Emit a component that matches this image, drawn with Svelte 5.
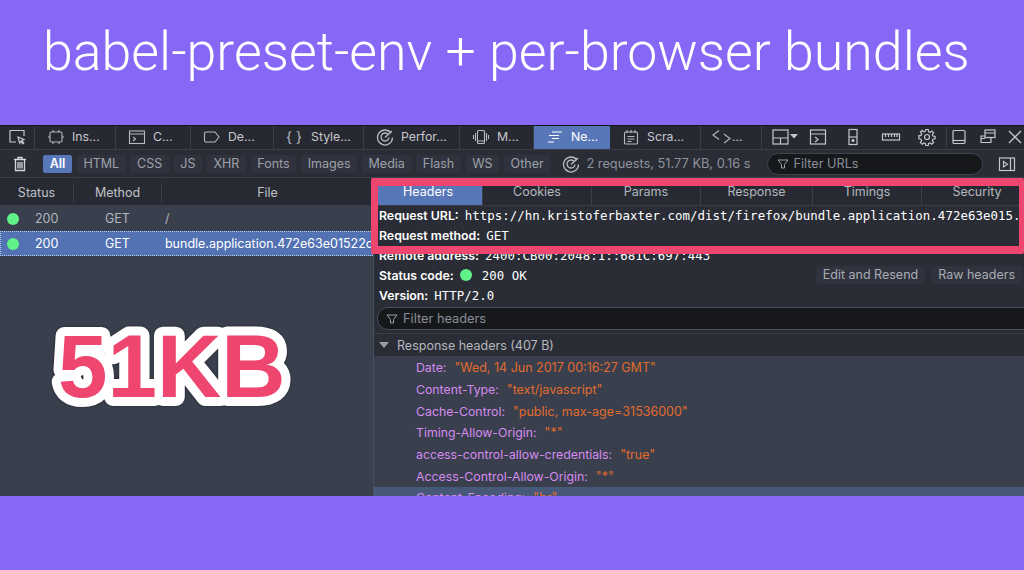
<script>
  const tools = [
    { label: 'Ins...', w: 81, icon: 'ins' },
    { label: 'C...', w: 75, icon: 'con' },
    { label: 'De...', w: 83, icon: 'dbg' },
    { label: 'Style...', w: 90, icon: 'sty' },
    { label: 'Perfor...', w: 96, icon: 'perf' },
    { label: 'M...', w: 74, icon: 'mem' },
    { label: 'Ne...', w: 76, icon: 'net', active: true },
    { label: 'Scra...', w: 91, icon: 'scr' },
    { label: '...', w: 61, icon: 'dom' }
  ];
  const filters = ['All', 'HTML', 'CSS', 'JS', 'XHR', 'Fonts', 'Images', 'Media', 'Flash', 'WS', 'Other'];
  const tabs = [
    { t: 'Headers', w: 109, active: true },
    { t: 'Cookies', w: 109 },
    { t: 'Params', w: 109 },
    { t: 'Response', w: 112 },
    { t: 'Timings', w: 109 },
    { t: 'Security', w: 110 }
  ];
  const headers = [
    ['Date', '"Wed, 14 Jun 2017 00:16:27 GMT"'],
    ['Content-Type', '"text/javascript"'],
    ['Cache-Control', '"public, max-age=31536000"'],
    ['Timing-Allow-Origin', '"*"'],
    ['access-control-allow-credentials', '"true"'],
    ['Access-Control-Allow-Origin', '"*"'],
    ['Content-Encoding', '"br"']
  ];
</script>

{#snippet gauge()}
  <svg class="ic" viewBox="0 0 18 18" width="18" height="18" fill="none" stroke="#b6bac2" stroke-width="1.3">
    <path d="M15 5A7.5 7.5 0 1 0 16.5 9.5" />
    <path d="M12.5 7A4 4 0 1 0 13 9.5" />
    <path d="M9 9.5l7-6.5" />
  </svg>
{/snippet}

<div class="slide">
  <h1>babel-preset-env + per-browser bundles</h1>
  <div class="devtools">
    <div class="toolbar">
      <div class="pick">
        <svg viewBox="0 0 18 18" width="18" height="18" fill="none" stroke="#c4c7ce" stroke-width="1.2">
          <path d="M8 14H2V2.5h14V8" /><path d="M10 9l6 2.5-2.4 1 2.2 2.5-1 .8-2.1-2.4L11.6 15z" />
        </svg>
      </div>
      {#each tools as t}
        <div class="tool" class:active={t.active} style="width:{t.w}px">
          {#if t.icon === 'ins'}
            <svg viewBox="0 0 18 18" width="18" height="18" fill="none" stroke="#b6bac2" stroke-width="1.1"><rect x="3" y="4" width="12" height="10" rx="1.5" /><path d="M6 4V2M12 4V2M6 16v-2M12 16v-2M1 9h2M15 9h2" /></svg>
          {:else if t.icon === 'con'}
            <svg viewBox="0 0 18 18" width="18" height="18" fill="none" stroke="#b6bac2" stroke-width="1.1"><rect x="1.5" y="3" width="15" height="12.5" /><path d="M1.5 6h15M5 9l2.5 2L5 13" /></svg>
          {:else if t.icon === 'dbg'}
            <svg viewBox="0 0 18 18" width="18" height="18" fill="none" stroke="#b6bac2" stroke-width="1.1"><path d="M3 4h9l4 5-4 5H3a1.5 1.5 0 0 1-1.5-1.5v-7A1.5 1.5 0 0 1 3 4z" /></svg>
          {:else if t.icon === 'sty'}
            <span class="braces">&#123; &#125;</span>
          {:else if t.icon === 'perf'}
            {@render gauge()}
          {:else if t.icon === 'mem'}
            <svg viewBox="0 0 18 18" width="18" height="18" fill="none" stroke="#b6bac2" stroke-width="1.1"><rect x="5.5" y="2.5" width="7" height="13" rx="1" /><path d="M3.5 5v8M1.5 7v4M14.5 5v8M16.5 7v4M5.5 13h7" /></svg>
          {:else if t.icon === 'net'}
            <svg viewBox="0 0 18 18" width="18" height="18" fill="none" stroke="#fff" stroke-width="1.2"><path d="M6 4h10M3 7.5h10M6 10.5h7M2 14h6" /></svg>
          {:else if t.icon === 'scr'}
            <svg viewBox="0 0 18 18" width="18" height="18" fill="none" stroke="#b6bac2" stroke-width="1.1"><rect x="2.5" y="4" width="13" height="12" rx="1" /><path d="M5 2v3M9 2v3M13 2v3M5.5 8.5h7M5.5 11h7M5.5 13.5h4" /></svg>
          {:else}
            <svg class="domic" viewBox="0 0 22 18" width="22" height="18" fill="none" stroke="#b6bac2" stroke-width="1.1"><path d="M9 2.5L3 7l6 4.500M14 6l6 4.500L14 15" /></svg>
          {/if}
          <span>{t.label}</span>
        </div>
      {/each}
      <div class="tool-right">
        <svg class="g0" viewBox="0 0 28 18" width="28" height="18" fill="none" stroke="#c4c7ce" stroke-width="1.2"><rect x="1" y="2" width="15" height="14" /><path d="M1 10h15M8.5 10v6" /><path d="M18 6h8l-4 4.5z" fill="#c4c7ce" stroke="none" /></svg>
        <svg class="g1" viewBox="0 0 18 18" width="18" height="18" fill="none" stroke="#c4c7ce" stroke-width="1.2"><rect x="1.5" y="2" width="15" height="14" /><path d="M1.5 6h15M6 9l3 2.5-3 2.5" /></svg>
        <svg class="g2" viewBox="0 0 18 18" width="18" height="18" fill="none" stroke="#c4c7ce" stroke-width="1.2"><rect x="5" y="1.5" width="8" height="15" /><path d="M5 9h8" /><circle cx="9" cy="12.5" r="1" fill="#c4c7ce" /></svg>
        <svg class="g3" viewBox="0 0 20 18" width="20" height="18" fill="none" stroke="#c4c7ce" stroke-width="1.2"><rect x="1.5" y="6" width="17" height="6" /><path d="M4.5 6v3M7.5 6v3M10.5 6v3M13.5 6v3M16 6v3" /></svg>
        <svg class="g2" viewBox="0 0 18 18" width="18" height="18" fill="none" stroke="#c4c7ce" stroke-width="1.2"><circle cx="9" cy="9" r="2.5" /><path d="M7.8 1.5h2.4l.4 2.2 1.5.6 1.8-1.300 1.700 1.700-1.300 1.800.6 1.500 2.200.4v2.400l-2.200.4-.6 1.500 1.300 1.800-1.700 1.700-1.800-1.300-1.500.6-.4 2.200H7.800l-.4-2.200-1.500-.6-1.800 1.300-1.700-1.700 1.300-1.800-.6-1.500-2.200-.4V7.800l2.200-.4.6-1.500-1.300-1.800 1.700-1.700 1.800 1.300 1.500-.6z" /></svg>
        <i class="sep"></i>
        <svg class="g4" viewBox="0 0 18 18" width="18" height="18" fill="none" stroke="#c4c7ce" stroke-width="1.2"><rect x="3" y="2.5" width="12" height="13" rx="1" /><path d="M3 12.5h12" /></svg>
        <svg class="g5" viewBox="0 0 18 18" width="18" height="18" fill="none" stroke="#c4c7ce" stroke-width="1.2"><rect x="6" y="2" width="10" height="7.5" /><path d="M6 5h10M6 8H2v6.5h10V9.5M2 10.5h4" /></svg>
        <svg class="g1" viewBox="0 0 18 18" width="18" height="18" fill="none" stroke="#c4c7ce" stroke-width="1.3"><path d="M3 3l12 12M15 3L3 15" /></svg>
      </div>
    </div>

    <div class="filterbar">
      <svg class="trash" viewBox="0 0 18 18" width="18" height="18" fill="none" stroke="#d4d6db" stroke-width="1.3"><path d="M3 4.5h12M7 4.5V2.5h4v2M4.5 4.5v11h9v-11M7 7v6.5M9 7v6.5M11 7v6.5" /></svg>
      <div class="chips">
        {#each filters as f, i}
          <span class="chip" class:on={i === 0}>{f}</span>
        {/each}
      </div>
      <div class="summary">
        {@render gauge()}
        <span>2 requests, 51.77 KB, 0.16 s</span>
      </div>
      <div class="urlfilter">
        <svg viewBox="0 0 12 12" width="12" height="12" fill="none" stroke="#9a9ea6" stroke-width="1"><path d="M1 2h10L7.5 6.5v3.5h-3V6.5z" /></svg>
        <span>Filter URLs</span>
      </div>
      <svg class="sidebar" viewBox="0 0 18 18" width="18" height="18" fill="none" stroke="#c4c7ce" stroke-width="1.2"><rect x="1.5" y="3" width="15" height="12.5" /><path d="M12.5 3v12.5" /><path d="M5.5 6.5l4 2.700-4 2.700z" /></svg>
    </div>

    <div class="panes">
      <div class="left">
        <div class="thead">
          <span class="c1">Status</span><span class="c2">Method</span><span class="c3">File</span>
        </div>
        <div class="row">
          <i class="dot"></i><span class="code">200</span><span class="m">GET</span><span class="f">/</span>
        </div>
        <div class="row sel">
          <i class="dot"></i><span class="code">200</span><span class="m">GET</span><span class="f">bundle.application.472e63e01522c</span>
        </div>
        <svg class="big" width="260" height="100" viewBox="0 0 260 100">
          <text x="6" y="81">51KB</text>
        </svg>
      </div>
      <div class="right">
        <div class="tabs">
          {#each tabs as t}
            <span class="tab" class:active={t.active} style="width:{t.w}px">{t.t}</span>
          {/each}
        </div>
        <div class="info">
          <div class="line"><b>Request URL:</b><code>https://hn.kristoferbaxter.com/dist/firefox/bundle.application.472e63e015.</code></div>
          <div class="line"><b>Request method:</b><code>GET</code></div>
          <div class="line"><b>Remote address:</b><code>2400:CB00:2048:1::681C:697:443</code></div>
          <div class="line status">
            <b>Status code:</b><i class="dot"></i><code class="ok">200 OK</code>
            <span class="btns"><span class="btn">Edit and Resend</span><span class="btn">Raw headers</span></span>
          </div>
          <div class="line"><b>Version:</b><code>HTTP/2.0</code></div>
        </div>
        <div class="hfilterwrap">
          <div class="hfilter">
            <svg viewBox="0 0 12 12" width="12" height="12" fill="none" stroke="#9a9ea6" stroke-width="1"><path d="M1 2h10L7.5 6.5v3.5h-3V6.5z" /></svg>
            <span>Filter headers</span>
          </div>
        </div>
        <div class="rh"><i class="tri"></i>Response headers (407 B)</div>
        <div class="hlist">
          {#each headers as h, i}
            <div class="hrow" class:hl={i === 6}><span class="k">{h[0]}:</span><span class="v">{h[1]}</span></div>
          {/each}
        </div>
      </div>
      <div class="redbox"></div>
    </div>
  </div>
</div>

<style>
  :global(body) { margin: 0; background: #8667f6; }
  .slide { width: 1024px; height: 570px; overflow: hidden; background: #8667f6; font-family: Roboto, sans-serif; }
  h1 { margin: 0; height: 125px; box-sizing: border-box; padding: 17px 0 0 43px; font: 300 53.7px/70px Roboto, sans-serif; color: #fff; white-space: nowrap; }
  .devtools { height: 371px; display: flex; flex-direction: column; overflow: hidden; background: #393f4c; font-family: Inter, Roboto, sans-serif; font-size: 12.5px; color: #b9bcc3; }
  .toolbar { height: 25px; flex: none; display: flex; background: #262932; border-top: 1px solid #15171c; border-bottom: 1px solid #3a3e48; box-sizing: border-box; }
  .pick { width: 35px; flex: none; display: flex; align-items: center; justify-content: center; padding-bottom: 2px; border-right: 1px solid #3a3e48; box-sizing: border-box; }
  .tool { flex: none; display: flex; align-items: center; gap: 7px; padding: 0 0 2px 12px; border-right: 1px solid #3a3e48; box-sizing: border-box; color: #c6c8ce; white-space: nowrap; font-size: 12.3px; }
  .tool.active { background: #5877b9; color: #fff; border-right: 0; }
  .braces { width: 18px; font-size: 14px; white-space: nowrap; color: #b6bac2; }
  .domic { margin: 0 -7px 0 -3px; }
  .tool-right { flex: 1; display: flex; align-items: center; padding: 0 0 2px 10px; min-width: 0; }
  .tool-right svg { flex: none; }
  .g1 { margin-left: 9px; }
  .g2 { margin-left: 17px; }
  .g3 { margin-left: 19px; }
  .g4 { margin-left: 3px; }
  .g5 { margin-left: 11px; }
  .sep { width: 1px; height: 20px; flex: none; background: #3a3e48; margin-left: 10px; }
  .filterbar { height: 28px; flex: none; display: flex; align-items: center; background: #2a2d36; border-bottom: 1px solid #3a3e48; box-sizing: border-box; padding-left: 11px; }
  .trash { flex: none; margin-right: 14px; }
  .chips { display: flex; gap: 4.5px; flex: none; }
  .chip { height: 18px; line-height: 18px; padding: 0 6.75px; background: #30333d; border-radius: 2px; color: #9da1aa; }
  .chip.on { background: #5877b9; color: #fff; font-weight: 600; }
  .summary { display: flex; align-items: center; gap: 6px; margin-left: 12px; color: #8e929b; white-space: nowrap; flex: none; font-size: 12.8px; }
  .urlfilter { display: flex; align-items: center; gap: 4px; margin-left: 17px; width: 216px; height: 22px; flex: none; box-sizing: border-box; padding-left: 9px; border: 1px solid #3e424c; border-radius: 11px; background: #16181c; color: #8a8e96; font-size: 12.7px; }
  .sidebar { margin-left: 15px; flex: none; }
  .panes { flex: 1; display: flex; min-height: 0; position: relative; }
  .left { width: 373px; flex: none; background: #393f4c; }
  .thead { height: 28px; display: flex; align-items: center; padding-top: 2px; background: #272a33; box-sizing: border-box; border-bottom: 1px solid #3a3e48; color: #bfc2c9; }
  .thead span { display: flex; align-items: center; justify-content: center; height: 20px; box-sizing: border-box; }
  .c1 { width: 74px; border-right: 1px solid #3a3e48; }
  .c2 { width: 88px; border-right: 1px solid #3a3e48; }
  .c3 { width: 211px; }
  .row { height: 25px; display: flex; align-items: center; white-space: nowrap; overflow: hidden; color: #b3b6bd; }
  .row.sel { background: #5272b4; color: #fff; outline: 1px dotted #b9c6e3; outline-offset: -1px; }
  .dot { display: inline-block; width: 12px; height: 12px; border-radius: 50%; background: #60f38a; flex: none; }
  .row .dot { margin-left: 7px; }
  .code { margin-left: 16px; width: 70px; }
  .m { width: 60px; }
  .big { display: block; margin: 60px 0 0 52px; overflow: visible; filter: drop-shadow(0 0 1px #1c1f28); }
  .big text { font: 700 89px "Liberation Sans", Arial, sans-serif; fill: #ef4670; stroke: #fff; stroke-width: 18px; stroke-linejoin: round; paint-order: stroke; }
  .right { flex: 1; min-width: 0; background: #2a2d36; border-left: 1px solid #4b505c; box-sizing: border-box; overflow: hidden; }
  .tabs { height: 28px; display: flex; background: #272a33; border-bottom: 1px solid #3a3e48; box-sizing: border-box; }
  .tab { flex: none; text-align: center; line-height: 27px; box-sizing: border-box; border-right: 1px solid #3a3e48; color: #b4b7be; }
  .tab.active { background: #5877b9; color: #fff; }
  .tab:last-child { border-right: 0; }
  .info { margin-top: -1px; padding-left: 5px; }
  .line { height: 20px; display: flex; align-items: center; gap: 6px; white-space: nowrap; color: #fff; }
  .line b { font-weight: 600; font-size: 12.3px; }
  .line code { font: 12.4px "DejaVu Sans Mono", monospace; letter-spacing: .05px; }
  .line code.ok { margin-left: 4px; }
  .status .btns { margin-left: auto; display: flex; gap: 6px; margin-right: 2px; }
  .btn { height: 18px; line-height: 18px; padding: 0 7px; background: #30333d; color: #a9acb4; border-radius: 2px; }
  .hfilterwrap { height: 28px; padding-top: 2px; box-sizing: border-box; padding-left: 3px; }
  .hfilter { display: flex; align-items: center; gap: 5px; height: 23px; margin-right: -12px; box-sizing: border-box; padding-left: 8px; border: 1px solid #4a4e58; border-radius: 11px; background: #16181c; color: #8a8e96; font-size: 12.8px; }
  .rh { height: 24px; display: flex; align-items: center; border-top: 1px solid #3a3e48; border-bottom: 1px solid #3a3e48; color: #b4b7be; padding-left: 23px; position: relative; box-sizing: border-box; }
  .tri { position: absolute; left: 5px; top: 8px; width: 0; height: 0; border: 5px solid transparent; border-top: 6px solid #9a9ea6; border-bottom: 0; }
  .hlist { background: #393f4c; height: 150px; overflow: hidden; }
  .hrow { height: 21.7px; display: flex; align-items: center; gap: 8px; padding-left: 42px; white-space: nowrap; }
  .hrow.hl { background: #475879; }
  .k { color: #d58bf0; font-size: 12.3px; }
  .v { color: #e26b2d; }
  .redbox { position: absolute; left: 371px; top: 0; width: 653px; height: 76px; box-sizing: border-box; border-style: solid; border-color: #ef4670; border-width: 8px 5px 8px 7px; border-radius: 2px; pointer-events: none; }
</style>
